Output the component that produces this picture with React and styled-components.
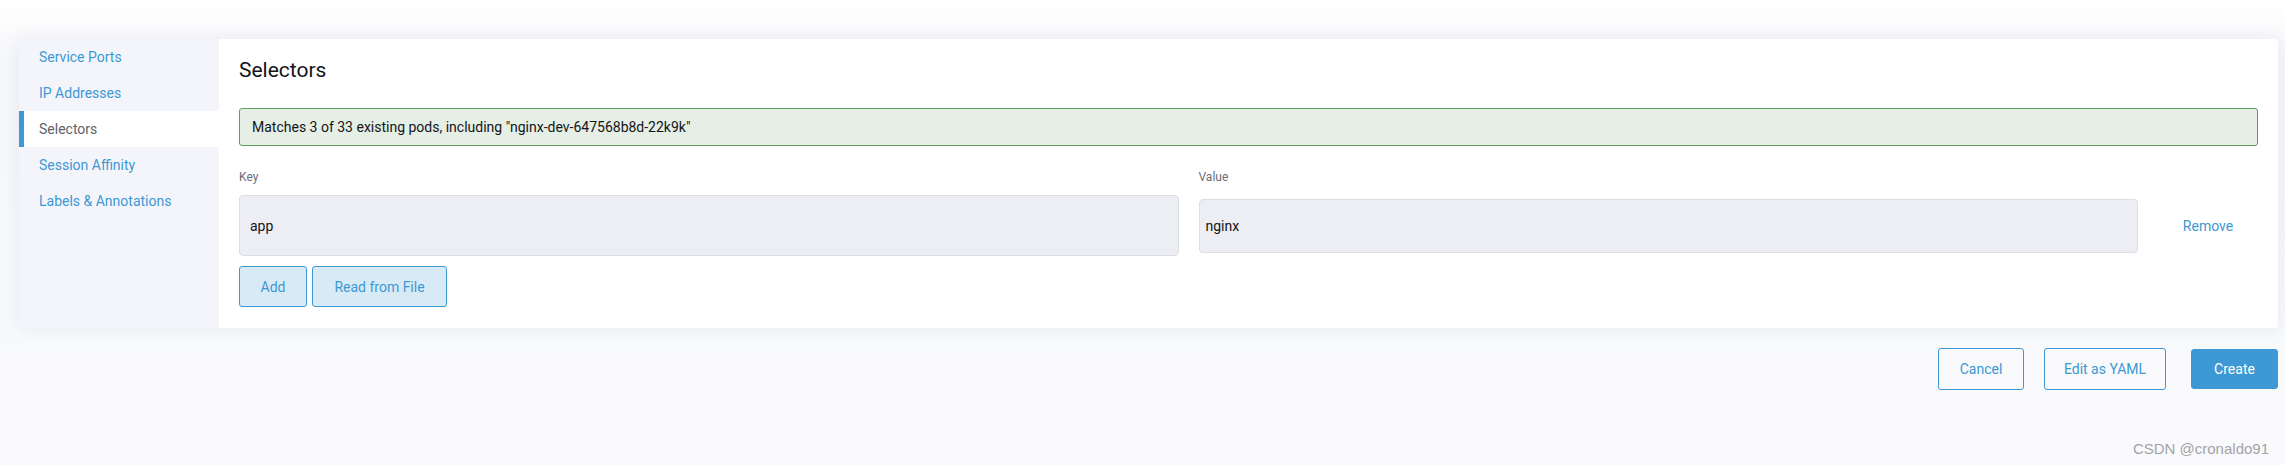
import React from "react";
import styled, { createGlobalStyle } from "styled-components";

const Global = createGlobalStyle`
  html, body { margin: 0; padding: 0; }
  body {
    font-family: Roboto, "Liberation Sans", sans-serif;
    background: linear-gradient(180deg, #ffffff 0px, #f6f7fa 60px, #f8f9fb 330px, #fafafc 465px);
    min-height: 465px;
  }
  * { box-sizing: border-box; }
`;

const Page = styled.div`
  position: relative;
  height: 465px;
  padding: 39px 7px 0 19px;
`;

const Card = styled.div`
  display: grid;
  grid-template-columns: 200px 1fr;
  background: #ffffff;
  border-radius: 4px;
  overflow: hidden;
  box-shadow: 0 0 18px rgba(30, 40, 80, 0.08);
`;

const Sidebar = styled.nav`
  background: #f4f5fa;
  display: flex;
  flex-direction: column;
`;

const SideItem = styled.div`
  height: 36px;
  display: flex;
  align-items: center;
  padding-left: ${(p) => (p.$active ? "15px" : "20px")};
  border-left: ${(p) => (p.$active ? "5px solid #3d98d3" : "none")};
  background: ${(p) => (p.$active ? "#ffffff" : "transparent")};
  color: ${(p) => (p.$active ? "#5f5f6a" : "#3d98d3")};
  font-size: 14px;
`;

const Main = styled.section`
  padding: 19px 20px 21px 20px;
`;

const Title = styled.h2`
  margin: 0 0 25px;
  font-size: 21px;
  line-height: 25px;
  font-weight: 400;
  color: #141419;
`;

const Banner = styled.div`
  height: 38px;
  border: 1px solid #5d9e5a;
  background: #e5efe5;
  border-radius: 3px;
  padding: 0 12px;
  display: flex;
  align-items: center;
  font-size: 14px;
  color: #141419;
`;

const KVGrid = styled.div`
  margin-top: 23px;
  display: grid;
  grid-template-columns: 1fr 1fr 100px;
  column-gap: 20px;
  row-gap: 10px;
  align-items: center;
`;

const Label = styled.div`
  font-size: 12px;
  line-height: 16px;
  color: #6c6c76;
`;

const Input = styled.div`
  height: ${(p) => p.$h}px;
  background: #edeef3;
  border: 1px solid #dcdee7;
  border-radius: 4px;
  display: flex;
  align-items: center;
  padding-left: ${(p) => p.$pad}px;
  font-size: 14px;
  color: #141419;
`;

const LinkText = styled.div`
  text-align: center;
  font-size: 14px;
  color: #3d98d3;
`;

const Actions = styled.div`
  margin-top: 10px;
  display: flex;
  gap: 5px;
`;

const Button = styled.button`
  font-family: Roboto, "Liberation Sans", sans-serif;
  height: ${(p) => p.$h || 41}px;
  width: ${(p) => (p.$w ? `${p.$w}px` : "auto")};
  padding: 0 ${(p) => (p.$w ? 0 : 21)}px;
  font-size: 14px;
  text-align: center;
  border-radius: 3px;
  border: 1px solid #3d98d3;
  cursor: pointer;
  background: ${(p) =>
    p.$variant === "primary" ? "#3d98d3" : p.$variant === "soft" ? "#d9eaf7" : "transparent"};
  color: ${(p) => (p.$variant === "primary" ? "#ffffff" : "#3d98d3")};
`;

const Footer = styled.div`
  margin-top: 20px;
  display: flex;
  justify-content: flex-end;
  align-items: center;
  gap: 20px;
`;

const PrimaryWrap = styled.div`
  margin-left: 5px;
  display: flex;
`;

const Watermark = styled.div`
  position: absolute;
  right: 16px;
  top: 440px;
  font-family: "Liberation Sans", Arial, sans-serif;
  font-size: 15px;
  color: #a3a3a8;
`;

const sections = ["Service Ports", "IP Addresses", "Selectors", "Session Affinity", "Labels & Annotations"];

export default function App() {
  return (
    <>
      <Global />
      <Page>
        <Card>
          <Sidebar>
            {sections.map((s) => (
              <SideItem key={s} $active={s === "Selectors"}>
                {s}
              </SideItem>
            ))}
          </Sidebar>
          <Main>
            <Title>Selectors</Title>
            <Banner>Matches 3 of 33 existing pods, including "nginx-dev-647568b8d-22k9k"</Banner>
            <KVGrid>
              <Label>Key</Label>
              <Label>Value</Label>
              <div />
              <Input $h={61} $pad={10}>app</Input>
              <Input $h={54} $pad={6}>nginx</Input>
              <LinkText>Remove</LinkText>
            </KVGrid>
            <Actions>
              <Button $variant="soft" $w={68}>Add</Button>
              <Button $variant="soft" $w={135}>Read from File</Button>
            </Actions>
          </Main>
        </Card>
        <Footer>
          <Button $h={42} $w={86}>Cancel</Button>
          <Button $h={42} $w={122}>Edit as YAML</Button>
          <PrimaryWrap>
            <Button $variant="primary" $h={40} $w={87}>Create</Button>
          </PrimaryWrap>
        </Footer>
        <Watermark>CSDN @cronaldo91</Watermark>
      </Page>
    </>
  );
}
